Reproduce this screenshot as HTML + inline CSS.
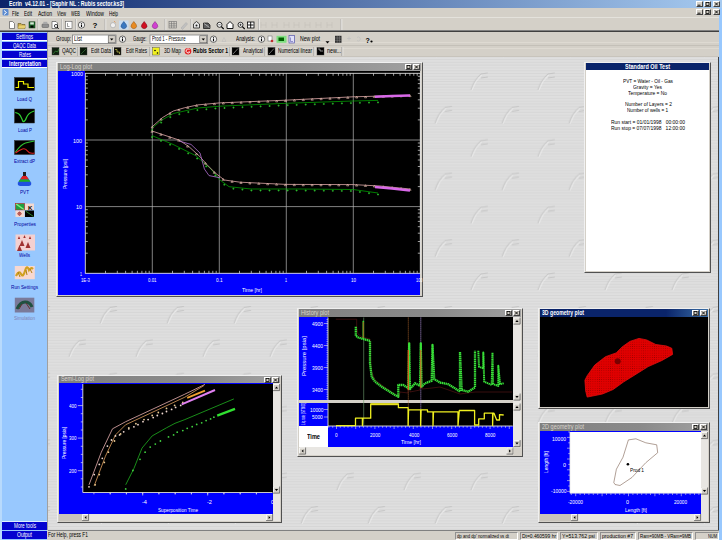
<!DOCTYPE html><html><head><meta charset="utf-8"><style>
*{margin:0;padding:0;box-sizing:border-box}
html,body{width:722px;height:540px;overflow:hidden;background:#D4D0C8;font-family:"Liberation Sans",sans-serif;position:relative}
.a{position:absolute}
.t{position:absolute;white-space:nowrap;line-height:1;}
svg{position:absolute;left:0;top:0;overflow:visible}
</style></head><body>
<div class="a" style="left:0px;top:0px;width:722px;height:8px;background:linear-gradient(to right,#0A246A 0%,#A6CAF0 100%)"></div>
<div id="t1" class="t" style="left:9.0px;top:0.8px;font-size:6.5px;color:#fff;transform:scaleX(0.803);transform-origin:0 0;font-weight:bold">Ecrin&nbsp; v4.12.01 - [Saphir NL : Rubis sector.ks3]</div>
<div class="a" style="left:0px;top:8px;width:722px;height:9px;background:#D4D0C8"></div>
<div id="t2" class="t" style="left:12.0px;top:9.8px;font-size:7px;color:#000;transform:scaleX(0.620);transform-origin:0 0;">File</div>
<div id="t3" class="t" style="left:24.0px;top:9.8px;font-size:7px;color:#000;transform:scaleX(0.663);transform-origin:0 0;">Edit</div>
<div id="t4" class="t" style="left:38.0px;top:9.8px;font-size:7px;color:#000;transform:scaleX(0.719);transform-origin:0 0;">Action</div>
<div id="t5" class="t" style="left:57.0px;top:9.8px;font-size:7px;color:#000;transform:scaleX(0.598);transform-origin:0 0;">View</div>
<div id="t6" class="t" style="left:71.0px;top:9.8px;font-size:7px;color:#000;transform:scaleX(0.564);transform-origin:0 0;">WEB</div>
<div id="t7" class="t" style="left:86.0px;top:9.8px;font-size:7px;color:#000;transform:scaleX(0.723);transform-origin:0 0;">Window</div>
<div id="t8" class="t" style="left:109.0px;top:9.8px;font-size:7px;color:#000;transform:scaleX(0.625);transform-origin:0 0;">Help</div>
<div class="a" style="left:0px;top:17px;width:722px;height:14px;background:#D4D0C8;border-top:1px solid #E4E2DC"></div>
<div class="a" style="left:0px;top:30px;width:722px;height:1px;background:#808080"></div>
<div class="a" style="left:0px;top:31px;width:722px;height:1px;background:#404040"></div>
<svg width="722" height="540"><line x1="38" y1="19" x2="38" y2="30" stroke="#A0A0A0" stroke-width="0.7"/><line x1="38.8" y1="19" x2="38.8" y2="30" stroke="#fff" stroke-width="0.6"/><line x1="61.5" y1="19" x2="61.5" y2="30" stroke="#A0A0A0" stroke-width="0.7"/><line x1="62.3" y1="19" x2="62.3" y2="30" stroke="#fff" stroke-width="0.6"/><line x1="75.5" y1="19" x2="75.5" y2="30" stroke="#A0A0A0" stroke-width="0.7"/><line x1="76.3" y1="19" x2="76.3" y2="30" stroke="#fff" stroke-width="0.6"/><line x1="105" y1="19" x2="105" y2="30" stroke="#A0A0A0" stroke-width="0.7"/><line x1="105.8" y1="19" x2="105.8" y2="30" stroke="#fff" stroke-width="0.6"/><line x1="165" y1="19" x2="165" y2="30" stroke="#A0A0A0" stroke-width="0.7"/><line x1="165.8" y1="19" x2="165.8" y2="30" stroke="#fff" stroke-width="0.6"/><line x1="191" y1="19" x2="191" y2="30" stroke="#A0A0A0" stroke-width="0.7"/><line x1="191.8" y1="19" x2="191.8" y2="30" stroke="#fff" stroke-width="0.6"/><line x1="258.5" y1="19" x2="258.5" y2="30" stroke="#A0A0A0" stroke-width="0.7"/><line x1="259.3" y1="19" x2="259.3" y2="30" stroke="#fff" stroke-width="0.6"/><line x1="341" y1="19" x2="341" y2="30" stroke="#A0A0A0" stroke-width="0.7"/><line x1="341.8" y1="19" x2="341.8" y2="30" stroke="#fff" stroke-width="0.6"/><rect x="2.5" y="9" width="6" height="6.5" rx="1" fill="#5A8AD0"/><path d="M4 10.5l2.5 2-2.5 2" stroke="#fff" stroke-width="1" fill="none"/><path d="M9.5 21.5h3l2 2v5h-5z" fill="#fff" stroke="#404040" stroke-width="0.6"/><path d="M18 23.5h3l1 1h3v4h-7z" fill="#C8A848" stroke="#605020" stroke-width="0.6"/><path d="M19 25.5h7l-1.5 3h-6.5z" fill="#E8D070"/><rect x="29" y="21.8" width="6" height="6.2" fill="#1A6A2A" stroke="#103010" stroke-width="0.5"/><rect x="30.2" y="22.3" width="3.6" height="2.2" fill="#D8E8D8"/><rect x="30.5" y="25.6" width="3" height="2" fill="#000"/><rect x="42" y="24" width="6.6" height="3.5" rx="0.8" fill="#909090" stroke="#505050" stroke-width="0.5"/><rect x="43.3" y="21.8" width="4" height="2.4" fill="#A8A8A8"/><path d="M52 21.5h4l1.5 1.5v5.5h-5.5z" fill="#fff" stroke="#404040" stroke-width="0.6"/><circle cx="56" cy="26" r="1.6" fill="none" stroke="#000" stroke-width="0.7"/><path d="M57.1 27.1l1.6 1.6" stroke="#000" stroke-width="0.9"/><rect x="65.5" y="21.3" width="6.5" height="7" fill="#fff" stroke="#606060" stroke-width="0.6"/><path d="M67.5 23v3.5h2" fill="none" stroke="#404040" stroke-width="0.5"/><circle cx="81.5" cy="25" r="3.2" fill="#F4F4F4" stroke="#303030" stroke-width="0.7"/><path d="M81.5 23.1v0.6M81.5 24.4v2.6" stroke="#000" stroke-width="1.1"/><text x="92.5" y="28.3" font-size="8" font-weight="bold" font-family="Liberation Sans" fill="#000">?</text><circle cx="113" cy="25.2" r="2.6" fill="#F0F0F0" stroke="#909090" stroke-width="0.5"/><path d="M114 21l1.5 1.5" stroke="#E09050" stroke-width="0.8"/><rect x="119" y="20.5" width="9.5" height="9" fill="#C8DCF0"/><path d="M123.8 21.5 Q127.0 25 126.6 26.5 A2.9 2.9 0 0 1 121.0 26.5 Q120.6 25 123.8 21.5Z" fill="#3A78C0" stroke="#204880" stroke-width="0.5"/><path d="M133.8 21.5 Q137.0 25 136.60000000000002 26.5 A2.9 2.9 0 0 1 131.0 26.5 Q130.60000000000002 25 133.8 21.5Z" fill="#E88A20" stroke="#905010" stroke-width="0.5"/><path d="M144.2 21.5 Q147.39999999999998 25 147.0 26.5 A2.9 2.9 0 0 1 141.39999999999998 26.5 Q141.0 25 144.2 21.5Z" fill="#D01020" stroke="#700010" stroke-width="0.5"/><path d="M155 21.5 Q158.2 25 157.8 26.5 A2.9 2.9 0 0 1 152.2 26.5 Q151.8 25 155 21.5Z" fill="#D040D0" stroke="#802080" stroke-width="0.5"/><g stroke="#707070" stroke-width="0.6" fill="none"><rect x="169" y="21.5" width="7.5" height="6.5"/><path d="M169 23.7h7.5M169 25.9h7.5M171.5 21.5v6.5M174 21.5v6.5"/></g><path d="M181 28l5-5.5 1.5 1.5-5 5.5z" fill="#C0C0C0" stroke="#A8A8A8" stroke-width="0.5"/><path d="M193.5 24l3-2.5 3 2.5v4h-6z" fill="#E8E8E8" stroke="#202020" stroke-width="0.8"/><circle cx="196.5" cy="25.6" r="1" fill="#202020"/><path d="M203.5 23h4.5l2 2v3.5h-6.5z" fill="#606060" stroke="#101010" stroke-width="0.7"/><path d="M204 23.5l5.5 4" stroke="#e0e0e0" stroke-width="0.6"/><circle cx="219.5" cy="24.8" r="2.5" fill="#fff" stroke="#000" stroke-width="0.8"/><path d="M221.3 26.6l2.4 2.4" stroke="#000" stroke-width="1.1"/><path d="M218.3 24.8h2.4" stroke="#000" stroke-width="0.6"/><path d="M227 24.5l3-3 3 3v4h-6z" fill="#fff" stroke="#000" stroke-width="0.9"/><circle cx="240.5" cy="24.8" r="2.5" fill="#fff" stroke="#000" stroke-width="0.8"/><path d="M242.3 26.6l2.4 2.4" stroke="#000" stroke-width="1.1"/><path d="M239.3 24.8h2.4M240.5 23.6v2.4" stroke="#000" stroke-width="0.6"/><rect x="247.5" y="22" width="6.5" height="6" fill="#fff" stroke="#000" stroke-width="0.8"/><path d="M248 25h5.5M250.7 22v6" stroke="#000" stroke-width="0.9"/><g stroke="#C4C0B8" stroke-width="0.6" fill="none"><path d="M261 22v6M261 25h5M266 22v6"/></g><g stroke="#C4C0B8" stroke-width="0.6" fill="none"><path d="M272 22v6M272 25h5M277 22v6"/></g><g stroke="#C4C0B8" stroke-width="0.6" fill="none"><path d="M284 22v6M284 25h5M289 22v6"/></g><g stroke="#C4C0B8" stroke-width="0.6" fill="none"><path d="M294 22v6M294 25h5M299 22v6"/></g><g stroke="#C4C0B8" stroke-width="0.6" fill="none"><path d="M305 22v6M305 25h5M310 22v6"/></g><g stroke="#C4C0B8" stroke-width="0.6" fill="none"><path d="M316 22v6M316 25h5M321 22v6"/></g><g stroke="#C4C0B8" stroke-width="0.6" fill="none"><path d="M327 22v6M327 25h5M332 22v6"/></g></svg>
<div class="a" style="left:719px;top:8px;width:3px;height:532px;background:#98C8FE"></div>
<div class="a" style="left:0px;top:32px;width:47px;height:508px;background:#98C8FE"></div>
<div class="a" style="left:0px;top:32px;width:2px;height:508px;background:#B8DAFC"></div>
<div class="a" style="left:47px;top:32px;width:1px;height:498px;background:#A0A0A0"></div>
<div class="a" style="left:2px;top:33px;width:45px;height:8px;background:#0404D0;border-bottom:1px solid #fff"></div>
<div id="t9" class="t" style="left:16.0px;top:33.5px;font-size:6.5px;color:#fff;transform:scaleX(0.723);transform-origin:0 0;">Settings</div>
<div class="a" style="left:2px;top:42px;width:45px;height:8px;background:#0404D0;border-bottom:1px solid #fff"></div>
<div id="t10" class="t" style="left:13.0px;top:42.5px;font-size:6.5px;color:#fff;transform:scaleX(0.663);transform-origin:0 0;">QAQC Data</div>
<div class="a" style="left:2px;top:51px;width:45px;height:8px;background:#0404D0;border-bottom:1px solid #fff"></div>
<div id="t11" class="t" style="left:18.5px;top:51.5px;font-size:6.5px;color:#fff;transform:scaleX(0.707);transform-origin:0 0;">Rates</div>
<div class="a" style="left:2px;top:60px;width:45px;height:8px;background:#0404D0;border-bottom:1px solid #fff"></div>
<div id="t12" class="t" style="left:8.5px;top:60.5px;font-size:6.5px;color:#fff;transform:scaleX(0.764);transform-origin:0 0;font-weight:bold">Interpretation</div>
<svg width="722" height="540"><rect x="14.5" y="77.5" width="20" height="13" fill="#000" stroke="#303030" stroke-width="0.5"/><path d="M15.5 87.5h3v-6h5v2.5h4.5v3.5h6" fill="none" stroke="#F0F000" stroke-width="1.2"/><rect x="14.5" y="109" width="20" height="14" fill="#000" stroke="#303030" stroke-width="0.5"/><path d="M15.2 112.5Q19 113 20.5 116T23 121.5Q25 122 26.5 117.5T34.3 111" fill="none" stroke="#30D030" stroke-width="1.2"/><rect x="14.5" y="140.5" width="20" height="14" fill="#000" stroke="#303030" stroke-width="0.5"/><path d="M15.5 152q6 -8 10 -9t9 -2" fill="none" stroke="#30C030" stroke-width="1.2"/><path d="M15.5 153q4 -3 7 -4t5 2t7 2" fill="none" stroke="#E02020" stroke-width="1.2"/><rect x="23" y="172" width="3" height="4" fill="#202020"/><path d="M22.5 176h4l4.5 6.5q1 3 -2 3.5h-9q-3 -0.5 -2 -3.5z" fill="#2050E0"/><path d="M22.5 176h4l2.5 3.6h-9z" fill="#E02020"/><path d="M20 179.6h9l1.5 2.2h-12z" fill="#20B020"/><rect x="15.5" y="203.5" width="9" height="6.5" fill="#20A040"/><path d="M15.5 203.5l9 6.5" stroke="#80F080" stroke-width="1.5"/><rect x="15.5" y="203.5" width="9" height="6.5" fill="none" stroke="#C02020" stroke-width="0.6"/><rect x="25" y="203.5" width="9" height="6.5" fill="#F4D8D0"/><text x="28" y="209.5" font-size="6" font-weight="bold" font-family="Liberation Sans" fill="#000">K</text><rect x="15.5" y="210.5" width="9" height="6.5" fill="#F4D8D0"/><circle cx="19.5" cy="213.7" r="1.5" fill="none" stroke="#A02020" stroke-width="0.8"/><path d="M17.5 213.7h4M19.5 211.7v4" stroke="#A02020" stroke-width="0.5"/><rect x="25" y="210.5" width="9" height="6.5" fill="#000"/><path d="M25.5 211l8 5.5" stroke="#30A030" stroke-width="0.8"/><rect x="15.5" y="234.5" width="19.5" height="16" fill="#F4D0D0"/><path d="M17.8 238.94L19 236.06L20.2 238.94z" fill="#A03030"/><path d="M23.3 237.94L24.5 235.06L25.7 237.94z" fill="#A03030"/><path d="M28.8 238.94L30 236.06L31.2 238.94z" fill="#A03030"/><path d="M19.5 246.0L22 240.0L24.5 246.0z" fill="#A03030"/><path d="M25.5 248.0L28 242.0L30.5 248.0z" fill="#A03030"/><path d="M17.0 251.0L19.5 245.0L22.0 251.0z" fill="#A03030"/><rect x="14.8" y="266" width="20" height="13.2" fill="#F8D8D0"/><path d="M16 276q3 -6 5 -2t4 -3t4 -1q2 -3 4 -1" fill="none" stroke="#D0A020" stroke-width="2.2"/><path d="M18 272l2 5M26 270l1 5M30 269l2 4" stroke="#B08010" stroke-width="1"/><rect x="14.8" y="297.7" width="19.5" height="14.8" fill="#7A7A9A"/><path d="M17 309q3 -7 8 -7t7 5" fill="none" stroke="#205040" stroke-width="3"/><path d="M19 309l3 -5M26 303l4 6" stroke="#603030" stroke-width="1"/></svg>
<div id="t13" class="t" style="left:17.0px;top:95.9px;font-size:6px;color:#0000A0;transform:scaleX(0.762);transform-origin:0 0;">Load Q</div>
<div id="t14" class="t" style="left:17.5px;top:127.0px;font-size:6px;color:#0000A0;transform:scaleX(0.736);transform-origin:0 0;">Load P</div>
<div id="t15" class="t" style="left:14.0px;top:157.5px;font-size:6px;color:#0000A0;transform:scaleX(0.758);transform-origin:0 0;">Extract dP</div>
<div id="t16" class="t" style="left:20.0px;top:189.4px;font-size:6px;color:#0000A0;transform:scaleX(0.771);transform-origin:0 0;">PVT</div>
<div id="t17" class="t" style="left:13.5px;top:221.0px;font-size:6px;color:#0000A0;transform:scaleX(0.804);transform-origin:0 0;">Properties</div>
<div id="t18" class="t" style="left:19.0px;top:252.4px;font-size:6px;color:#0000A0;transform:scaleX(0.755);transform-origin:0 0;">Wells</div>
<div id="t19" class="t" style="left:11.0px;top:284.4px;font-size:6px;color:#0000A0;transform:scaleX(0.786);transform-origin:0 0;">Run Settings</div>
<div id="t20" class="t" style="left:14.0px;top:315.4px;font-size:6px;color:#8080B0;transform:scaleX(0.750);transform-origin:0 0;">Simulation</div>
<div class="a" style="left:2px;top:521px;width:45px;height:1px;background:#E0F0FF"></div>
<div class="a" style="left:2px;top:522px;width:45px;height:8px;background:#0404D0"></div>
<div id="t21" class="t" style="left:13.5px;top:522.8px;font-size:6.5px;color:#fff;transform:scaleX(0.725);transform-origin:0 0;">More tools</div>
<div class="a" style="left:2px;top:531px;width:45px;height:8px;background:#0404D0"></div>
<div id="t22" class="t" style="left:17.0px;top:531.5px;font-size:6.5px;color:#fff;transform:scaleX(0.769);transform-origin:0 0;">Output</div>
<div class="a" style="left:48px;top:32px;width:671px;height:26px;background:#D4D0C8"></div>
<div class="a" style="left:48px;top:45px;width:671px;height:1px;background:#C4C0B8"></div>
<div class="a" style="left:48px;top:42px;width:671px;height:0.6px;background:#DEDAD2"></div>
<div class="a" style="left:48px;top:48px;width:671px;height:0.6px;background:#DEDAD2"></div>
<div class="a" style="left:48px;top:56px;width:671px;height:1px;background:#C8C4BC"></div>
<svg width="722" height="540"><rect x="72.5" y="35" width="43.5" height="8.5" fill="#fff" stroke="#808080" stroke-width="0.8"/><rect x="108.2" y="35.8" width="7" height="7" fill="#D4D0C8" stroke="#404040" stroke-width="0.5"/><path d="M110 38.6h3.4l-1.7 2z" fill="#000"/><rect x="150" y="35" width="57.6" height="8.5" fill="#fff" stroke="#808080" stroke-width="0.8"/><rect x="199.8" y="35.8" width="7" height="7" fill="#D4D0C8" stroke="#404040" stroke-width="0.5"/><path d="M201.6 38.6h3.4l-1.7 2z" fill="#000"/><circle cx="122.5" cy="39.2" r="3.2" fill="#F4F4F4" stroke="#303030" stroke-width="0.7"/><path d="M122.5 37.300000000000004v0.6M122.5 38.6v2.6" stroke="#000" stroke-width="1.1"/><circle cx="213.5" cy="39.2" r="3.2" fill="#F4F4F4" stroke="#303030" stroke-width="0.7"/><path d="M213.5 37.300000000000004v0.6M213.5 38.6v2.6" stroke="#000" stroke-width="1.1"/><path d="M222 41.5l2-4 2 4z" fill="none" stroke="#C0C0C0" stroke-width="0.6"/><circle cx="261.5" cy="39.2" r="3.2" fill="#F4F4F4" stroke="#303030" stroke-width="0.7"/><path d="M261.5 37.300000000000004v0.6M261.5 38.6v2.6" stroke="#000" stroke-width="1.1"/><rect x="268" y="36" width="4" height="5" fill="#fff" stroke="#606060" stroke-width="0.5"/><circle cx="272" cy="41" r="1.3" fill="#C03030"/><rect x="276.5" y="35.8" width="10" height="7" fill="#80E080"/><rect x="278.5" y="37.5" width="5.5" height="3.5" fill="#006000"/><rect x="289" y="35.5" width="5.5" height="7.5" fill="#E0E0F8" stroke="#4040A0" stroke-width="0.6"/><path d="M290.5 37.5v4h2.5" stroke="#4040A0" stroke-width="0.5" fill="none"/><path d="M325.5 41.2h4l-2 2.2z" fill="#000"/><rect x="335" y="35.8" width="6.5" height="7" fill="#303030"/><path d="M335 38h6.5M335 40.3h6.5M337.2 35.8v7M339.4 35.8v7" stroke="#A0A0A0" stroke-width="0.4"/><path d="M347 38.5h4M349 36.5v4" stroke="#C0C0C0" stroke-width="0.7"/><path d="M357 37.5a2 2 0 1 1 0 3" stroke="#C0C0C0" stroke-width="0.7" fill="none"/><text x="365.5" y="42.5" font-size="7" font-weight="bold" font-family="Liberation Sans" fill="#000">?</text><circle cx="371.5" cy="41.5" r="1.1" fill="#000"/><rect x="52" y="47.5" width="7" height="7.5" fill="#102010" stroke="#404040" stroke-width="0.4"/><path d="M53 54l2.5-3 2 1 1.5-3" stroke="#40A040" stroke-width="0.6" fill="none"/><rect x="80" y="47.5" width="7" height="7.5" fill="#081808" stroke="#404040" stroke-width="0.4"/><path d="M81 54l5-5" stroke="#408040" stroke-width="0.6"/><rect x="114" y="47.5" width="7" height="7.5" fill="#101008" stroke="#404040" stroke-width="0.4"/><path d="M115 49.5h2v2.5h2.5v2" stroke="#E0E060" stroke-width="0.6" fill="none"/><rect x="152.5" y="47.5" width="7" height="7.5" fill="#F0F020" stroke="#404040" stroke-width="0.4"/><circle cx="155" cy="50.5" r="0.8" fill="#000"/><circle cx="157.5" cy="53" r="0.8" fill="#000"/><circle cx="188" cy="51.2" r="3.3" fill="#E02020"/><path d="M189.5 49.5a2 2 0 1 0 0.3 2.5h-1.4" stroke="#fff" stroke-width="0.9" fill="none"/><rect x="232" y="47.5" width="7" height="7.5" fill="#000" stroke="#404040" stroke-width="0.4"/><path d="M233 54l5-5.5" stroke="#C0C0C0" stroke-width="0.6"/><rect x="268" y="47.5" width="7" height="7.5" fill="#000" stroke="#404040" stroke-width="0.4"/><path d="M269 54l5-5.5" stroke="#C0C0C0" stroke-width="0.6"/><rect x="317" y="47.5" width="7" height="7.5" fill="#000" stroke="#404040" stroke-width="0.4"/><path d="M318 49h2v2h3" stroke="#E0E0E0" stroke-width="0.6" fill="none"/><line x1="78" y1="47" x2="78" y2="56" stroke="#808080" stroke-width="0.7"/><line x1="78.8" y1="47" x2="78.8" y2="56" stroke="#fff" stroke-width="0.6"/><line x1="112.5" y1="47" x2="112.5" y2="56" stroke="#808080" stroke-width="0.7"/><line x1="113.3" y1="47" x2="113.3" y2="56" stroke="#fff" stroke-width="0.6"/><line x1="150" y1="47" x2="150" y2="56" stroke="#808080" stroke-width="0.7"/><line x1="150.8" y1="47" x2="150.8" y2="56" stroke="#fff" stroke-width="0.6"/><line x1="230" y1="47" x2="230" y2="56" stroke="#808080" stroke-width="0.7"/><line x1="230.8" y1="47" x2="230.8" y2="56" stroke="#fff" stroke-width="0.6"/><line x1="265" y1="47" x2="265" y2="56" stroke="#808080" stroke-width="0.7"/><line x1="265.8" y1="47" x2="265.8" y2="56" stroke="#fff" stroke-width="0.6"/><line x1="314" y1="47" x2="314" y2="56" stroke="#808080" stroke-width="0.7"/><line x1="314.8" y1="47" x2="314.8" y2="56" stroke="#fff" stroke-width="0.6"/><line x1="342" y1="47" x2="342" y2="56" stroke="#808080" stroke-width="0.7"/><line x1="342.8" y1="47" x2="342.8" y2="56" stroke="#fff" stroke-width="0.6"/></svg>
<div id="t23" class="t" style="left:55.5px;top:36.0px;font-size:6.5px;color:#000;transform:scaleX(0.760);transform-origin:0 0;">Group:</div>
<div id="t24" class="t" style="left:74.0px;top:36.0px;font-size:6.5px;color:#000;transform:scaleX(0.790);transform-origin:0 0;">List</div>
<div id="t25" class="t" style="left:132.6px;top:36.0px;font-size:6.5px;color:#000;transform:scaleX(0.628);transform-origin:0 0;">Gauge:</div>
<div id="t26" class="t" style="left:151.5px;top:36.0px;font-size:6.5px;color:#000;transform:scaleX(0.658);transform-origin:0 0;">Prod 1 - Pressure</div>
<div id="t27" class="t" style="left:235.5px;top:36.0px;font-size:6.5px;color:#000;transform:scaleX(0.723);transform-origin:0 0;">Analysis:</div>
<div id="t28" class="t" style="left:300.0px;top:36.0px;font-size:6.5px;color:#000;transform:scaleX(0.791);transform-origin:0 0;">New plot</div>
<div id="t29" class="t" style="left:62.0px;top:48.2px;font-size:6.5px;color:#000;transform:scaleX(0.731);transform-origin:0 0;">QAQC</div>
<div id="t30" class="t" style="left:91.0px;top:48.2px;font-size:6.5px;color:#000;transform:scaleX(0.748);transform-origin:0 0;">Edit Data</div>
<div id="t31" class="t" style="left:126.0px;top:48.2px;font-size:6.5px;color:#000;transform:scaleX(0.700);transform-origin:0 0;">Edit Rates</div>
<div id="t32" class="t" style="left:164.0px;top:48.2px;font-size:6.5px;color:#000;transform:scaleX(0.747);transform-origin:0 0;">3D Map</div>
<div id="t33" class="t" style="left:192.5px;top:48.2px;font-size:6.5px;color:#000;transform:scaleX(0.769);transform-origin:0 0;font-weight:bold">Rubis Sector 1</div>
<div id="t34" class="t" style="left:243.0px;top:48.2px;font-size:6.5px;color:#000;transform:scaleX(0.719);transform-origin:0 0;">Analytical</div>
<div id="t35" class="t" style="left:278.0px;top:48.2px;font-size:6.5px;color:#000;transform:scaleX(0.724);transform-origin:0 0;">Numerical linear</div>
<div id="t36" class="t" style="left:327.0px;top:48.2px;font-size:6.5px;color:#000;transform:scaleX(0.824);transform-origin:0 0;">new...</div>
<svg width="722" height="540" style="left:0;top:0"><defs>
<pattern id="tex" x="473.8" y="80" width="67" height="66.7" patternUnits="userSpaceOnUse">
<rect width="67" height="66.7" fill="#DFDFDF"/>
<g stroke="#D3D3D3" stroke-width="0.7">
<line x1="0" y1="1.5" x2="67" y2="1.5"/><line x1="0" y1="4.3" x2="67" y2="4.3"/><line x1="0" y1="7.1" x2="67" y2="7.1"/><line x1="0" y1="9.9" x2="67" y2="9.9"/><line x1="0" y1="12.7" x2="67" y2="12.7"/><line x1="0" y1="15.5" x2="67" y2="15.5"/><line x1="0" y1="18.3" x2="67" y2="18.3"/><line x1="0" y1="21.1" x2="67" y2="21.1"/><line x1="0" y1="23.9" x2="67" y2="23.9"/><line x1="0" y1="26.7" x2="67" y2="26.7"/><line x1="0" y1="29.5" x2="67" y2="29.5"/><line x1="0" y1="32.3" x2="67" y2="32.3"/><line x1="0" y1="35.1" x2="67" y2="35.1"/><line x1="0" y1="37.9" x2="67" y2="37.9"/><line x1="0" y1="40.7" x2="67" y2="40.7"/><line x1="0" y1="43.5" x2="67" y2="43.5"/><line x1="0" y1="46.3" x2="67" y2="46.3"/><line x1="0" y1="49.1" x2="67" y2="49.1"/><line x1="0" y1="51.9" x2="67" y2="51.9"/><line x1="0" y1="54.7" x2="67" y2="54.7"/><line x1="0" y1="57.5" x2="67" y2="57.5"/><line x1="0" y1="60.3" x2="67" y2="60.3"/><line x1="0" y1="63.1" x2="67" y2="63.1"/><line x1="0" y1="65.9" x2="67" y2="65.9"/>
</g>
<g fill="none" stroke="#C2C2C2" stroke-width="0.9"><path d="M-3 10 Q0 0 7 -6 L14 -7 M7 -2 L14 -3" transform=""/><path d="M-3 10 Q0 0 7 -6 L14 -7 M7 -2 L14 -3" transform="translate(67 0)"/><path d="M-3 10 Q0 0 7 -6 L14 -7 M7 -2 L14 -3" transform="translate(0 66.7)"/><path d="M-3 10 Q0 0 7 -6 L14 -7 M7 -2 L14 -3" transform="translate(67 66.7)"/><path d="M-3 10 Q0 0 7 -6 L14 -7 M7 -2 L14 -3" transform="translate(31.2 -33.3)"/><path d="M-3 10 Q0 0 7 -6 L14 -7 M7 -2 L14 -3" transform="translate(31.2 33.3)"/></g>
<g fill="none" stroke="#F0F0F0" stroke-width="0.7"><path d="M-2 10.5 Q1 1 8 -5" transform=""/><path d="M-2 10.5 Q1 1 8 -5" transform="translate(67 0)"/><path d="M-2 10.5 Q1 1 8 -5" transform="translate(0 66.7)"/><path d="M-2 10.5 Q1 1 8 -5" transform="translate(67 66.7)"/><path d="M-2 10.5 Q1 1 8 -5" transform="translate(31.2 -33.3)"/><path d="M-2 10.5 Q1 1 8 -5" transform="translate(31.2 33.3)"/></g>
</pattern></defs>
<rect x="48" y="57" width="671" height="473" fill="url(#tex)"/></svg>
<div class="a" style="left:48px;top:530px;width:671px;height:10px;background:#D4D0C8"></div>
<div class="a" style="left:48px;top:530px;width:671px;height:1px;background:#808080"></div>
<div id="t37" class="t" style="left:48.0px;top:531.8px;font-size:6.5px;color:#000;transform:scaleX(0.743);transform-origin:0 0;">For Help, press F1</div>
<div id="t38" class="t" style="left:457.0px;top:532.5px;font-size:6px;color:#000;transform:scaleX(0.710);transform-origin:0 0;">dp and dp' normalized vs dt</div>
<div id="t39" class="t" style="left:522.0px;top:532.5px;font-size:6px;color:#000;transform:scaleX(0.819);transform-origin:0 0;">Dt=0.460599 hr</div>
<div id="t40" class="t" style="left:562.0px;top:532.5px;font-size:6px;color:#000;transform:scaleX(0.856);transform-origin:0 0;">Y=513.762 psi</div>
<div id="t41" class="t" style="left:602.0px;top:532.5px;font-size:6px;color:#000;transform:scaleX(0.852);transform-origin:0 0;">production #7</div>
<div id="t42" class="t" style="left:640.0px;top:532.5px;font-size:6px;color:#000;transform:scaleX(0.732);transform-origin:0 0;">Ram=90MB - VRam=9MB</div>
<div id="t43" class="t" style="left:708.0px;top:532.5px;font-size:6px;color:#000;transform:scaleX(0.658);transform-origin:0 0;">NUM</div>
<div class="a" style="left:455px;top:531.5px;width:63px;height:8.5px;border-left:1px solid #909090;border-top:1px solid #909090;border-right:1px solid #fff;border-bottom:1px solid #fff"></div>
<div class="a" style="left:520px;top:531.5px;width:38px;height:8.5px;border-left:1px solid #909090;border-top:1px solid #909090;border-right:1px solid #fff;border-bottom:1px solid #fff"></div>
<div class="a" style="left:560px;top:531.5px;width:38px;height:8.5px;border-left:1px solid #909090;border-top:1px solid #909090;border-right:1px solid #fff;border-bottom:1px solid #fff"></div>
<div class="a" style="left:600px;top:531.5px;width:36px;height:8.5px;border-left:1px solid #909090;border-top:1px solid #909090;border-right:1px solid #fff;border-bottom:1px solid #fff"></div>
<div class="a" style="left:638px;top:531.5px;width:55px;height:8.5px;border-left:1px solid #909090;border-top:1px solid #909090;border-right:1px solid #fff;border-bottom:1px solid #fff"></div>
<div class="a" style="left:695px;top:531.5px;width:24px;height:8.5px;border-left:1px solid #909090;border-top:1px solid #909090;border-right:1px solid #fff;border-bottom:1px solid #fff"></div>
<div class="a" style="left:696px;top:9px;width:7px;height:6px;background:#D4D0C8;border-left:1px solid #fff;border-top:1px solid #fff;border-right:1px solid #404040;border-bottom:1px solid #404040"></div>
<svg width="722" height="540"><line x1="697.5" y1="13.2" x2="700.5" y2="13.2" stroke="#000" stroke-width="0.9"/></svg>
<div class="a" style="left:696px;top:1px;width:7px;height:6px;background:#D4D0C8;border-left:1px solid #fff;border-top:1px solid #fff;border-right:1px solid #404040;border-bottom:1px solid #404040"></div>
<svg width="722" height="540"><line x1="697.5" y1="5.2" x2="700.5" y2="5.2" stroke="#000" stroke-width="0.9"/></svg>
<div class="a" style="left:704px;top:9px;width:7px;height:6px;background:#D4D0C8;border-left:1px solid #fff;border-top:1px solid #fff;border-right:1px solid #404040;border-bottom:1px solid #404040"></div>
<svg width="722" height="540"><rect x="706" y="10.5" width="3" height="3" fill="none" stroke="#000" stroke-width="0.8"/></svg>
<div class="a" style="left:704px;top:1px;width:7px;height:6px;background:#D4D0C8;border-left:1px solid #fff;border-top:1px solid #fff;border-right:1px solid #404040;border-bottom:1px solid #404040"></div>
<svg width="722" height="540"><rect x="706" y="2.5" width="3" height="3" fill="none" stroke="#000" stroke-width="0.8"/></svg>
<div class="a" style="left:713px;top:9px;width:7px;height:6px;background:#D4D0C8;border-left:1px solid #fff;border-top:1px solid #fff;border-right:1px solid #404040;border-bottom:1px solid #404040"></div>
<svg width="722" height="540"><path d="M715 10.5 L718 13.5 M718 10.5 L715 13.5" stroke="#000" stroke-width="0.9"/></svg>
<div class="a" style="left:713px;top:1px;width:7px;height:6px;background:#D4D0C8;border-left:1px solid #fff;border-top:1px solid #fff;border-right:1px solid #404040;border-bottom:1px solid #404040"></div>
<svg width="722" height="540"><path d="M715 2.5 L718 5.5 M718 2.5 L715 5.5" stroke="#000" stroke-width="0.9"/></svg>
<div class="a" style="left:56px;top:62px;width:367px;height:235px;background:#D4D0C8;border-left:1px solid #F0F0F0;border-top:1px solid #F0F0F0;border-right:1px solid #505050;border-bottom:1px solid #505050"></div>
<div class="a" style="left:58px;top:63px;width:363px;height:8px;background:linear-gradient(to right,#808080,#8A8A8A 60%,#A0A0A0)"></div>
<div id="t44" class="t" style="left:59.5px;top:63.8px;font-size:6.5px;color:#D8D4CC;transform:scaleX(0.885);transform-origin:0 0;">Log-Log plot</div>
<div class="a" style="left:405px;top:64px;width:7px;height:6px;background:#D4D0C8;border-left:1px solid #fff;border-top:1px solid #fff;border-right:1px solid #404040;border-bottom:1px solid #404040"></div>
<svg width="722" height="540"><rect x="407" y="65.5" width="3" height="3" fill="none" stroke="#000" stroke-width="0.8"/></svg>
<div class="a" style="left:413px;top:64px;width:7px;height:6px;background:#D4D0C8;border-left:1px solid #fff;border-top:1px solid #fff;border-right:1px solid #404040;border-bottom:1px solid #404040"></div>
<svg width="722" height="540"><path d="M415 65.5 L418 68.5 M418 65.5 L415 68.5" stroke="#000" stroke-width="0.9"/></svg>
<div class="a" style="left:58px;top:71px;width:362px;height:224px;background:#0000FF"></div>
<div class="a" style="left:85px;top:71px;width:335px;height:202px;background:#000"></div>
<svg width="722" height="540"><line x1="152.3" y1="73.3" x2="152.3" y2="273.3" stroke="#B8B8B8" stroke-width="0.7"/><line x1="219.3" y1="73.3" x2="219.3" y2="273.3" stroke="#B8B8B8" stroke-width="0.7"/><line x1="286.3" y1="73.3" x2="286.3" y2="273.3" stroke="#B8B8B8" stroke-width="0.7"/><line x1="353.3" y1="73.3" x2="353.3" y2="273.3" stroke="#B8B8B8" stroke-width="0.7"/><line x1="85.3" y1="206.6" x2="420.3" y2="206.6" stroke="#B8B8B8" stroke-width="0.7"/><line x1="85.3" y1="140.0" x2="420.3" y2="140.0" stroke="#B8B8B8" stroke-width="0.7"/><rect x="85.3" y="73.3" width="335.0" height="200.0" fill="none" stroke="#E0E0E0" stroke-width="0.9"/><path d="M105.5 273.3v-2.5M105.5 73.3v2.5M117.3 273.3v-2.5M117.3 73.3v2.5M125.6 273.3v-2.5M125.6 73.3v2.5M132.1 273.3v-2.5M132.1 73.3v2.5M137.4 273.3v-2.5M137.4 73.3v2.5M141.9 273.3v-2.5M141.9 73.3v2.5M145.8 273.3v-2.5M145.8 73.3v2.5M149.2 273.3v-2.5M149.2 73.3v2.5M172.5 273.3v-2.5M172.5 73.3v2.5M184.3 273.3v-2.5M184.3 73.3v2.5M192.6 273.3v-2.5M192.6 73.3v2.5M199.1 273.3v-2.5M199.1 73.3v2.5M204.4 273.3v-2.5M204.4 73.3v2.5M208.9 273.3v-2.5M208.9 73.3v2.5M212.8 273.3v-2.5M212.8 73.3v2.5M216.2 273.3v-2.5M216.2 73.3v2.5M239.5 273.3v-2.5M239.5 73.3v2.5M251.3 273.3v-2.5M251.3 73.3v2.5M259.6 273.3v-2.5M259.6 73.3v2.5M266.1 273.3v-2.5M266.1 73.3v2.5M271.4 273.3v-2.5M271.4 73.3v2.5M275.9 273.3v-2.5M275.9 73.3v2.5M279.8 273.3v-2.5M279.8 73.3v2.5M283.2 273.3v-2.5M283.2 73.3v2.5M306.5 273.3v-2.5M306.5 73.3v2.5M318.3 273.3v-2.5M318.3 73.3v2.5M326.6 273.3v-2.5M326.6 73.3v2.5M333.1 273.3v-2.5M333.1 73.3v2.5M338.4 273.3v-2.5M338.4 73.3v2.5M342.9 273.3v-2.5M342.9 73.3v2.5M346.8 273.3v-2.5M346.8 73.3v2.5M350.2 273.3v-2.5M350.2 73.3v2.5M373.5 273.3v-2.5M373.5 73.3v2.5M385.3 273.3v-2.5M385.3 73.3v2.5M393.6 273.3v-2.5M393.6 73.3v2.5M400.1 273.3v-2.5M400.1 73.3v2.5M405.4 273.3v-2.5M405.4 73.3v2.5M409.9 273.3v-2.5M409.9 73.3v2.5M413.8 273.3v-2.5M413.8 73.3v2.5M417.2 273.3v-2.5M417.2 73.3v2.5M85.3 253.2h2.5M420.3 253.2h-2.5M85.3 241.5h2.5M420.3 241.5h-2.5M85.3 233.2h2.5M420.3 233.2h-2.5M85.3 226.7h2.5M420.3 226.7h-2.5M85.3 221.4h2.5M420.3 221.4h-2.5M85.3 217.0h2.5M420.3 217.0h-2.5M85.3 213.1h2.5M420.3 213.1h-2.5M85.3 209.7h2.5M420.3 209.7h-2.5M85.3 186.6h2.5M420.3 186.6h-2.5M85.3 174.8h2.5M420.3 174.8h-2.5M85.3 166.5h2.5M420.3 166.5h-2.5M85.3 160.0h2.5M420.3 160.0h-2.5M85.3 154.8h2.5M420.3 154.8h-2.5M85.3 150.3h2.5M420.3 150.3h-2.5M85.3 146.4h2.5M420.3 146.4h-2.5M85.3 143.0h2.5M420.3 143.0h-2.5M85.3 119.9h2.5M420.3 119.9h-2.5M85.3 108.2h2.5M420.3 108.2h-2.5M85.3 99.8h2.5M420.3 99.8h-2.5M85.3 93.4h2.5M420.3 93.4h-2.5M85.3 88.1h2.5M420.3 88.1h-2.5M85.3 83.6h2.5M420.3 83.6h-2.5M85.3 79.8h2.5M420.3 79.8h-2.5M85.3 76.3h2.5M420.3 76.3h-2.5" stroke="#E0E0E0" stroke-width="0.7"/><polyline points="152.2,128.0 162.0,120.0 173.3,113.5 197.8,108.0 219.6,106.2 286.0,103.3 353.0,101.0 378.0,100.4" fill="none" stroke="#00B000" stroke-width="0.7" stroke-linejoin="round" /><polyline points="152.0,135.6 173.0,144.4 195.6,155.6 211.0,169.0 220.0,180.0 229.0,186.7 251.0,189.0 300.0,189.0 353.0,189.5 378.0,193.0" fill="none" stroke="#00B000" stroke-width="0.7" stroke-linejoin="round" /><path d="M151.2 130.0h2M152.2 129.0v2" stroke="#30D030" stroke-width="0.7"/><path d="M160.2 122.6h2M161.2 121.6v2" stroke="#30D030" stroke-width="0.7"/><path d="M169.3 117.2h2M170.3 116.2v2" stroke="#30D030" stroke-width="0.7"/><path d="M178.3 114.2h2M179.3 113.2v2" stroke="#30D030" stroke-width="0.7"/><path d="M187.3 112.1h2M188.3 111.1v2" stroke="#30D030" stroke-width="0.7"/><path d="M196.4 110.1h2M197.4 109.1v2" stroke="#30D030" stroke-width="0.7"/><path d="M205.4 109.3h2M206.4 108.3v2" stroke="#30D030" stroke-width="0.7"/><path d="M214.4 108.5h2M215.4 107.5v2" stroke="#30D030" stroke-width="0.7"/><path d="M223.5 108.0h2M224.5 107.0v2" stroke="#30D030" stroke-width="0.7"/><path d="M232.5 107.6h2M233.5 106.6v2" stroke="#30D030" stroke-width="0.7"/><path d="M241.5 107.2h2M242.5 106.2v2" stroke="#30D030" stroke-width="0.7"/><path d="M250.6 106.8h2M251.6 105.8v2" stroke="#30D030" stroke-width="0.7"/><path d="M259.6 106.4h2M260.6 105.4v2" stroke="#30D030" stroke-width="0.7"/><path d="M268.6 106.0h2M269.6 105.0v2" stroke="#30D030" stroke-width="0.7"/><path d="M277.6 105.6h2M278.6 104.6v2" stroke="#30D030" stroke-width="0.7"/><path d="M286.7 105.2h2M287.7 104.2v2" stroke="#30D030" stroke-width="0.7"/><path d="M295.7 104.9h2M296.7 103.9v2" stroke="#30D030" stroke-width="0.7"/><path d="M304.7 104.6h2M305.7 103.6v2" stroke="#30D030" stroke-width="0.7"/><path d="M313.8 104.3h2M314.8 103.3v2" stroke="#30D030" stroke-width="0.7"/><path d="M322.8 104.0h2M323.8 103.0v2" stroke="#30D030" stroke-width="0.7"/><path d="M331.8 103.7h2M332.8 102.7v2" stroke="#30D030" stroke-width="0.7"/><path d="M340.9 103.4h2M341.9 102.4v2" stroke="#30D030" stroke-width="0.7"/><path d="M349.9 103.1h2M350.9 102.1v2" stroke="#30D030" stroke-width="0.7"/><path d="M358.9 102.8h2M359.9 101.8v2" stroke="#30D030" stroke-width="0.7"/><path d="M368.0 102.6h2M369.0 101.6v2" stroke="#30D030" stroke-width="0.7"/><path d="M377.0 102.4h2M378.0 101.4v2" stroke="#30D030" stroke-width="0.7"/><path d="M151.0 137.1h2M152.0 136.1v2" stroke="#30D030" stroke-width="0.7"/><path d="M160.0 140.9h2M161.0 139.9v2" stroke="#30D030" stroke-width="0.7"/><path d="M169.1 144.7h2M170.1 143.7v2" stroke="#30D030" stroke-width="0.7"/><path d="M178.1 148.9h2M179.1 147.9v2" stroke="#30D030" stroke-width="0.7"/><path d="M187.2 153.4h2M188.2 152.4v2" stroke="#30D030" stroke-width="0.7"/><path d="M196.2 158.5h2M197.2 157.5v2" stroke="#30D030" stroke-width="0.7"/><path d="M205.2 166.4h2M206.2 165.4v2" stroke="#30D030" stroke-width="0.7"/><path d="M214.3 175.7h2M215.3 174.7v2" stroke="#30D030" stroke-width="0.7"/><path d="M223.3 184.7h2M224.3 183.7v2" stroke="#30D030" stroke-width="0.7"/><path d="M232.4 188.7h2M233.4 187.7v2" stroke="#30D030" stroke-width="0.7"/><path d="M241.4 189.6h2M242.4 188.6v2" stroke="#30D030" stroke-width="0.7"/><path d="M250.4 190.5h2M251.4 189.5v2" stroke="#30D030" stroke-width="0.7"/><path d="M259.5 190.5h2M260.5 189.5v2" stroke="#30D030" stroke-width="0.7"/><path d="M268.5 190.5h2M269.5 189.5v2" stroke="#30D030" stroke-width="0.7"/><path d="M277.6 190.5h2M278.6 189.5v2" stroke="#30D030" stroke-width="0.7"/><path d="M286.6 190.5h2M287.6 189.5v2" stroke="#30D030" stroke-width="0.7"/><path d="M295.6 190.5h2M296.6 189.5v2" stroke="#30D030" stroke-width="0.7"/><path d="M304.7 190.6h2M305.7 189.6v2" stroke="#30D030" stroke-width="0.7"/><path d="M313.7 190.6h2M314.7 189.6v2" stroke="#30D030" stroke-width="0.7"/><path d="M322.8 190.7h2M323.8 189.7v2" stroke="#30D030" stroke-width="0.7"/><path d="M331.8 190.8h2M332.8 189.8v2" stroke="#30D030" stroke-width="0.7"/><path d="M340.8 190.9h2M341.8 189.9v2" stroke="#30D030" stroke-width="0.7"/><path d="M349.9 191.0h2M350.9 190.0v2" stroke="#30D030" stroke-width="0.7"/><path d="M358.9 192.0h2M359.9 191.0v2" stroke="#30D030" stroke-width="0.7"/><path d="M368.0 193.2h2M369.0 192.2v2" stroke="#30D030" stroke-width="0.7"/><path d="M377.0 194.5h2M378.0 193.5v2" stroke="#30D030" stroke-width="0.7"/><polyline points="152.2,126.7 162.2,117.8 173.3,111.0 184.4,107.8 197.8,104.9 219.6,102.9 251.0,101.6 286.0,100.2 353.0,96.8 410.0,95.3" fill="none" stroke="#E0A8A8" stroke-width="0.8" stroke-linejoin="round" /><polyline points="152.0,131.0 162.0,134.4 179.0,140.0 189.0,146.7 200.0,156.7 206.7,164.4 215.6,173.3 224.4,180.0 240.0,182.2 286.0,184.4 353.0,184.6 380.0,186.0 410.0,189.0" fill="none" stroke="#E0A8A8" stroke-width="0.8" stroke-linejoin="round" /><polyline points="179.0,141.0 191.0,144.4 200.0,153.0 204.4,169.0 209.0,175.6 220.0,177.8" fill="none" stroke="#B070D0" stroke-width="0.8" stroke-linejoin="round" /><path d="M151.1 128.0L152.2 126.2L153.3 128.0z" fill="none" stroke="#E8C0B0" stroke-width="0.6"/><path d="M160.0 120.1L161.1 118.3L162.2 120.1z" fill="none" stroke="#E8C0B0" stroke-width="0.6"/><path d="M168.9 114.3L170.0 112.5L171.1 114.3z" fill="none" stroke="#E8C0B0" stroke-width="0.6"/><path d="M177.8 110.7L178.9 108.9L180.0 110.7z" fill="none" stroke="#E8C0B0" stroke-width="0.6"/><path d="M186.7 108.4L187.8 106.6L188.9 108.4z" fill="none" stroke="#E8C0B0" stroke-width="0.6"/><path d="M195.5 106.4L196.6 104.6L197.7 106.4z" fill="none" stroke="#E8C0B0" stroke-width="0.6"/><path d="M204.4 105.5L205.5 103.7L206.6 105.5z" fill="none" stroke="#E8C0B0" stroke-width="0.6"/><path d="M213.3 104.7L214.4 102.9L215.5 104.7z" fill="none" stroke="#E8C0B0" stroke-width="0.6"/><path d="M222.2 104.0L223.3 102.2L224.4 104.0z" fill="none" stroke="#E8C0B0" stroke-width="0.6"/><path d="M231.1 103.7L232.2 101.9L233.3 103.7z" fill="none" stroke="#E8C0B0" stroke-width="0.6"/><path d="M240.0 103.3L241.1 101.5L242.2 103.3z" fill="none" stroke="#E8C0B0" stroke-width="0.6"/><path d="M248.9 102.9L250.0 101.1L251.1 102.9z" fill="none" stroke="#E8C0B0" stroke-width="0.6"/><path d="M257.8 102.6L258.9 100.8L260.0 102.6z" fill="none" stroke="#E8C0B0" stroke-width="0.6"/><path d="M266.7 102.2L267.8 100.4L268.9 102.2z" fill="none" stroke="#E8C0B0" stroke-width="0.6"/><path d="M275.6 101.9L276.7 100.1L277.8 101.9z" fill="none" stroke="#E8C0B0" stroke-width="0.6"/><path d="M284.4 101.5L285.5 99.7L286.6 101.5z" fill="none" stroke="#E8C0B0" stroke-width="0.6"/><path d="M293.3 101.1L294.4 99.3L295.5 101.1z" fill="none" stroke="#E8C0B0" stroke-width="0.6"/><path d="M302.2 100.6L303.3 98.8L304.4 100.6z" fill="none" stroke="#E8C0B0" stroke-width="0.6"/><path d="M311.1 100.2L312.2 98.4L313.3 100.2z" fill="none" stroke="#E8C0B0" stroke-width="0.6"/><path d="M320.0 99.7L321.1 97.9L322.2 99.7z" fill="none" stroke="#E8C0B0" stroke-width="0.6"/><path d="M328.9 99.3L330.0 97.5L331.1 99.3z" fill="none" stroke="#E8C0B0" stroke-width="0.6"/><path d="M337.8 98.8L338.9 97.0L340.0 98.8z" fill="none" stroke="#E8C0B0" stroke-width="0.6"/><path d="M346.7 98.4L347.8 96.6L348.9 98.4z" fill="none" stroke="#E8C0B0" stroke-width="0.6"/><path d="M355.6 98.0L356.7 96.2L357.8 98.0z" fill="none" stroke="#E8C0B0" stroke-width="0.6"/><path d="M364.5 97.8L365.6 96.0L366.7 97.8z" fill="none" stroke="#E8C0B0" stroke-width="0.6"/><path d="M373.3 97.5L374.4 95.7L375.5 97.5z" fill="none" stroke="#E8C0B0" stroke-width="0.6"/><path d="M382.2 97.3L383.3 95.5L384.4 97.3z" fill="none" stroke="#E8C0B0" stroke-width="0.6"/><path d="M391.1 97.1L392.2 95.3L393.3 97.1z" fill="none" stroke="#E8C0B0" stroke-width="0.6"/><path d="M400.0 96.8L401.1 95.0L402.2 96.8z" fill="none" stroke="#E8C0B0" stroke-width="0.6"/><path d="M408.9 96.6L410.0 94.8L411.1 96.6z" fill="none" stroke="#E8C0B0" stroke-width="0.6"/><path d="M150.9 132.3L152.0 130.5L153.1 132.3z" fill="none" stroke="#E8C0B0" stroke-width="0.6"/><path d="M159.8 135.3L160.9 133.5L162.0 135.3z" fill="none" stroke="#E8C0B0" stroke-width="0.6"/><path d="M168.7 138.3L169.8 136.5L170.9 138.3z" fill="none" stroke="#E8C0B0" stroke-width="0.6"/><path d="M177.6 141.2L178.7 139.4L179.8 141.2z" fill="none" stroke="#E8C0B0" stroke-width="0.6"/><path d="M186.5 147.1L187.6 145.3L188.7 147.1z" fill="none" stroke="#E8C0B0" stroke-width="0.6"/><path d="M195.4 154.8L196.5 153.0L197.6 154.8z" fill="none" stroke="#E8C0B0" stroke-width="0.6"/><path d="M204.3 164.2L205.4 162.4L206.5 164.2z" fill="none" stroke="#E8C0B0" stroke-width="0.6"/><path d="M213.2 173.3L214.3 171.5L215.4 173.3z" fill="none" stroke="#E8C0B0" stroke-width="0.6"/><path d="M222.1 180.4L223.2 178.6L224.3 180.4z" fill="none" stroke="#E8C0B0" stroke-width="0.6"/><path d="M231.0 182.4L232.1 180.6L233.2 182.4z" fill="none" stroke="#E8C0B0" stroke-width="0.6"/><path d="M239.9 183.5L241.0 181.7L242.1 183.5z" fill="none" stroke="#E8C0B0" stroke-width="0.6"/><path d="M248.8 184.0L249.9 182.2L251.0 184.0z" fill="none" stroke="#E8C0B0" stroke-width="0.6"/><path d="M257.7 184.4L258.8 182.6L259.9 184.4z" fill="none" stroke="#E8C0B0" stroke-width="0.6"/><path d="M266.6 184.8L267.7 183.0L268.8 184.8z" fill="none" stroke="#E8C0B0" stroke-width="0.6"/><path d="M275.5 185.2L276.6 183.4L277.7 185.2z" fill="none" stroke="#E8C0B0" stroke-width="0.6"/><path d="M284.3 185.7L285.4 183.9L286.5 185.7z" fill="none" stroke="#E8C0B0" stroke-width="0.6"/><path d="M293.2 185.7L294.3 183.9L295.4 185.7z" fill="none" stroke="#E8C0B0" stroke-width="0.6"/><path d="M302.1 185.8L303.2 184.0L304.3 185.8z" fill="none" stroke="#E8C0B0" stroke-width="0.6"/><path d="M311.0 185.8L312.1 184.0L313.2 185.8z" fill="none" stroke="#E8C0B0" stroke-width="0.6"/><path d="M319.9 185.8L321.0 184.0L322.1 185.8z" fill="none" stroke="#E8C0B0" stroke-width="0.6"/><path d="M328.8 185.8L329.9 184.0L331.0 185.8z" fill="none" stroke="#E8C0B0" stroke-width="0.6"/><path d="M337.7 185.9L338.8 184.1L339.9 185.9z" fill="none" stroke="#E8C0B0" stroke-width="0.6"/><path d="M346.6 185.9L347.7 184.1L348.8 185.9z" fill="none" stroke="#E8C0B0" stroke-width="0.6"/><path d="M355.5 186.1L356.6 184.3L357.7 186.1z" fill="none" stroke="#E8C0B0" stroke-width="0.6"/><path d="M364.4 186.5L365.5 184.7L366.6 186.5z" fill="none" stroke="#E8C0B0" stroke-width="0.6"/><path d="M373.3 187.0L374.4 185.2L375.5 187.0z" fill="none" stroke="#E8C0B0" stroke-width="0.6"/><path d="M382.2 187.6L383.3 185.8L384.4 187.6z" fill="none" stroke="#E8C0B0" stroke-width="0.6"/><path d="M391.1 188.5L392.2 186.7L393.3 188.5z" fill="none" stroke="#E8C0B0" stroke-width="0.6"/><path d="M400.0 189.4L401.1 187.6L402.2 189.4z" fill="none" stroke="#E8C0B0" stroke-width="0.6"/><path d="M408.9 190.3L410.0 188.5L411.1 190.3z" fill="none" stroke="#E8C0B0" stroke-width="0.6"/><polyline points="375.0,96.8 392.0,96.0 410.0,95.5" fill="none" stroke="#D868E8" stroke-width="2.4" stroke-linejoin="round" /><polyline points="375.0,187.0 392.0,188.5 410.0,190.5" fill="none" stroke="#D868E8" stroke-width="2.6" stroke-linejoin="round" /></svg>
<div id="t45" class="t" style="left:71.0px;top:71.0px;font-size:6px;color:#fff;transform:scaleX(0.898);transform-origin:0 0;">1000</div>
<div id="t46" class="t" style="left:73.0px;top:137.5px;font-size:6px;color:#fff;transform:scaleX(0.899);transform-origin:0 0;">100</div>
<div id="t47" class="t" style="left:76.0px;top:204.2px;font-size:6px;color:#fff;transform:scaleX(0.897);transform-origin:0 0;">10</div>
<div id="t48" class="t" style="left:80.0px;top:270.5px;font-size:6px;color:#fff;transform:scaleX(0.598);transform-origin:0 0;">1</div>
<div id="t49" class="t" style="left:81.0px;top:277.0px;font-size:6px;color:#fff;transform:scaleX(0.709);transform-origin:0 0;">1E-3</div>
<div id="t50" class="t" style="left:148.2px;top:277.0px;font-size:6px;color:#fff;transform:scaleX(0.727);transform-origin:0 0;">0.01</div>
<div id="t51" class="t" style="left:215.9px;top:277.0px;font-size:6px;color:#fff;transform:scaleX(0.779);transform-origin:0 0;">0.1</div>
<div id="t52" class="t" style="left:285.2px;top:277.0px;font-size:6px;color:#fff;transform:scaleX(0.598);transform-origin:0 0;">1</div>
<div id="t53" class="t" style="left:350.7px;top:277.0px;font-size:6px;color:#fff;transform:scaleX(0.748);transform-origin:0 0;">10</div>
<div id="t54" class="t" style="left:415.8px;top:277.0px;font-size:6px;color:#fff;transform:scaleX(0.649);transform-origin:0 0;">100</div>
<div id="t55" class="t" style="left:242.2px;top:287.2px;font-size:6px;color:#fff;transform:scaleX(0.853);transform-origin:0 0;">Time [hr]</div>
<div id="t56" class="t" style="left:64.5px;top:174.0px;font-size:6px;color:#fff;transform:translate(-50%,-50%) rotate(-90deg) scaleX(0.818);transform-origin:50% 50%">Pressure [psi]</div>
<div class="a" style="left:584px;top:62px;width:127px;height:211px;background:#D4D0C8;border-left:1px solid #F0F0F0;border-top:1px solid #F0F0F0;border-right:1px solid #505050;border-bottom:1px solid #505050"></div>
<div class="a" style="left:586px;top:63px;width:123px;height:7px;background:#0A246A"></div>
<div class="a" style="left:586px;top:70px;width:123px;height:201px;background:#fff"></div>
<div id="t57" class="t" style="left:625.0px;top:63.5px;font-size:6.5px;color:#fff;transform:scaleX(0.844);transform-origin:0 0;font-weight:bold">Standard Oil Test</div>
<div id="t58" class="t" style="left:622.5px;top:77.8px;font-size:6px;color:#000;transform:scaleX(0.791);transform-origin:0 0;">PVT = Water - Oil - Gas</div>
<div id="t59" class="t" style="left:633.0px;top:83.7px;font-size:6px;color:#000;transform:scaleX(0.816);transform-origin:0 0;">Gravity = Yes</div>
<div id="t60" class="t" style="left:628.0px;top:89.5px;font-size:6px;color:#000;transform:scaleX(0.809);transform-origin:0 0;">Temperature = No</div>
<div id="t61" class="t" style="left:625.0px;top:101.2px;font-size:6px;color:#000;transform:scaleX(0.812);transform-origin:0 0;">Number of Layers = 2</div>
<div id="t62" class="t" style="left:627.0px;top:106.7px;font-size:6px;color:#000;transform:scaleX(0.771);transform-origin:0 0;">Number of wells = 1</div>
<div id="t63" class="t" style="left:611.0px;top:119.0px;font-size:6px;color:#000;transform:scaleX(0.826);transform-origin:0 0;">Run start = 01/01/1998&nbsp;&nbsp; 00:00:00</div>
<div id="t64" class="t" style="left:611.0px;top:124.5px;font-size:6px;color:#000;transform:scaleX(0.829);transform-origin:0 0;">Run stop = 07/07/1998&nbsp;&nbsp; 12:00:00</div>
<div class="a" style="left:297px;top:308px;width:226px;height:149px;background:#D4D0C8;border-left:1px solid #F0F0F0;border-top:1px solid #F0F0F0;border-right:1px solid #505050;border-bottom:1px solid #505050"></div>
<div class="a" style="left:299px;top:309px;width:222px;height:8px;background:linear-gradient(to right,#808080,#8A8A8A 60%,#A0A0A0)"></div>
<div id="t65" class="t" style="left:300.5px;top:309.8px;font-size:6.5px;color:#D8D4CC;transform:scaleX(0.861);transform-origin:0 0;">History plot</div>
<div class="a" style="left:505px;top:310px;width:7px;height:6px;background:#D4D0C8;border-left:1px solid #fff;border-top:1px solid #fff;border-right:1px solid #404040;border-bottom:1px solid #404040"></div>
<svg width="722" height="540"><rect x="507" y="311.5" width="3" height="3" fill="none" stroke="#000" stroke-width="0.8"/></svg>
<div class="a" style="left:513px;top:310px;width:7px;height:6px;background:#D4D0C8;border-left:1px solid #fff;border-top:1px solid #fff;border-right:1px solid #404040;border-bottom:1px solid #404040"></div>
<svg width="722" height="540"><path d="M515 311.5 L518 314.5 M518 311.5 L515 314.5" stroke="#000" stroke-width="0.9"/></svg>
<div class="a" style="left:299px;top:317px;width:214px;height:130px;background:#0000FF"></div>
<div class="a" style="left:328px;top:317px;width:185px;height:83px;background:#000"></div>
<div class="a" style="left:299px;top:400px;width:214px;height:3px;background:#D4D0C8"></div>
<div class="a" style="left:328px;top:403px;width:185px;height:23px;background:#000"></div>
<div class="a" style="left:299px;top:426px;width:29px;height:21px;background:#fff"></div>
<svg width="722" height="540"><line x1="328" y1="317.5" x2="328" y2="400.5" stroke="#E0E0E0" stroke-width="0.9"/><line x1="328" y1="403.5" x2="328" y2="426" stroke="#E0E0E0" stroke-width="0.9"/><line x1="328" y1="426" x2="512.7" y2="426" stroke="#E0E0E0" stroke-width="0.9"/><path d="M326.5 319.5h1.5M326.5 321.7h1.5M326.5 323.9h1.5M326.5 326.1h1.5M326.5 328.3h1.5M326.5 330.5h1.5M326.5 332.7h1.5M326.5 334.9h1.5M326.5 337.1h1.5M326.5 339.3h1.5M326.5 341.5h1.5M326.5 343.7h1.5M326.5 345.9h1.5M326.5 348.1h1.5M326.5 350.3h1.5M326.5 352.5h1.5M326.5 354.7h1.5M326.5 356.9h1.5M326.5 359.1h1.5M326.5 361.3h1.5M326.5 363.5h1.5M326.5 365.7h1.5M326.5 367.9h1.5M326.5 370.1h1.5M326.5 372.3h1.5M326.5 374.5h1.5M326.5 376.7h1.5M326.5 378.9h1.5M326.5 381.1h1.5M326.5 383.3h1.5M326.5 385.5h1.5M326.5 387.7h1.5M326.5 389.9h1.5M326.5 392.1h1.5M326.5 394.3h1.5M326.5 396.5h1.5M326.5 398.7h1.5M324 323.5h4M324 345.5h4M324 367.5h4M324 389.5h4M324 409.5h4M324 417h4M328.8 426v1.8M332.7 426v1.8M336.5 426v3M340.3 426v1.8M344.2 426v1.8M348.0 426v1.8M351.9 426v1.8M355.7 426v3M359.5 426v1.8M363.4 426v1.8M367.2 426v1.8M371.1 426v1.8M374.9 426v3M378.7 426v1.8M382.6 426v1.8M386.4 426v1.8M390.3 426v1.8M394.1 426v3M397.9 426v1.8M401.8 426v1.8M405.6 426v1.8M409.5 426v1.8M413.3 426v3M417.1 426v1.8M421.0 426v1.8M424.8 426v1.8M428.7 426v1.8M432.5 426v3M436.3 426v1.8M440.2 426v1.8M444.0 426v1.8M447.9 426v1.8M451.7 426v3M455.5 426v1.8M459.4 426v1.8M463.2 426v1.8M467.1 426v1.8M470.9 426v3M474.7 426v1.8M478.6 426v1.8M482.4 426v1.8M486.3 426v1.8M490.1 426v3M493.9 426v1.8M497.8 426v1.8M501.6 426v1.8M505.5 426v1.8M509.3 426v3" stroke="#E0E0E0" stroke-width="0.6"/><line x1="363.7" y1="317.5" x2="363.7" y2="426" stroke="#70A070" stroke-width="0.6"/><line x1="408.3" y1="317.5" x2="408.3" y2="426" stroke="#C07030" stroke-width="0.7" stroke-dasharray="1.2 0.8"/><line x1="420.8" y1="317.5" x2="420.8" y2="426" stroke="#C0A0F0" stroke-width="0.8" stroke-dasharray="1.2 0.8"/><polyline points="335.8,319.2 356.7,319.2 356.7,327.5 358.0,334.0 362.0,337.0 370.0,339.0 370.0,342.0 371.0,370.0 375.0,380.0 390.0,391.0 399.0,397.0 400.0,392.0 408.0,393.0 409.0,345.0 410.0,392.0 420.0,390.0 421.0,345.0 422.0,389.0 432.0,388.0 440.0,387.0 460.0,394.0 475.0,392.0 512.0,392.0" fill="none" stroke="#601818" stroke-width="0.6" stroke-linejoin="round" /><polyline points="355.8,326.7 355.8,335.8 358.3,337.5 363.3,339.0 370.0,340.8 370.0,363.3 371.7,376.7 375.0,381.7 381.7,386.7 388.3,390.8 395.0,395.0 398.3,396.7 398.3,385.0 403.3,385.0 408.3,388.3 409.2,343.3 410.0,389.0 415.0,383.3 420.0,385.8 420.8,343.3 421.5,386.7 425.0,383.3 431.7,380.8 432.5,345.0 434.2,379.2 440.0,382.5 448.3,384.2 455.0,388.3 460.0,391.7 460.0,351.7 461.7,390.0 468.3,391.7 475.0,387.5 475.0,350.8" fill="none" stroke="#38E038" stroke-width="2.3" stroke-linejoin="round" stroke-dasharray="1.4 0.5"/><polyline points="478.3,350.8 479.0,366.7 483.3,368.3 483.3,352.5 484.2,381.7 491.7,385.0 492.5,352.5 493.0,384.0 498.3,386.0 498.3,365.8 500.0,384.0 504.2,383.3" fill="none" stroke="#38E038" stroke-width="2.0" stroke-linejoin="round" stroke-dasharray="1.4 0.5"/><polyline points="363.3,320.8 363.3,339.0" fill="none" stroke="#30E030" stroke-width="1.6" stroke-linejoin="round" /><polyline points="363.3,322.0 363.3,338.0" fill="none" stroke="#C04020" stroke-width="0.8" stroke-linejoin="round" /><polyline points="408.3,350.0 408.3,390.0" fill="none" stroke="#E06020" stroke-width="1.2" stroke-linejoin="round" /><polyline points="420.8,350.0 420.8,388.0" fill="none" stroke="#E06020" stroke-width="1.0" stroke-linejoin="round" /><polyline points="336.0,425.7 355.5,425.7 355.5,418.2 362.4,418.2 362.4,425.7 362.9,418.2 370.7,418.2 370.7,404.0 398.4,404.0 398.4,407.7 408.1,407.7 408.1,425.7 408.6,409.9 420.6,409.9 420.6,425.7 421.1,409.9 427.5,409.9 427.5,411.9 433.0,411.9 433.0,425.7 433.5,411.9 458.0,411.9 458.0,425.7 459.3,410.5 474.6,410.5 474.6,425.0 478.7,425.0 478.7,418.8 484.3,418.8 484.3,413.2 492.6,413.2 492.6,425.7 493.0,413.2 494.0,413.2 496.7,420.0 499.5,420.0 499.5,414.6 503.7,415.0" fill="none" stroke="#F0F020" stroke-width="1.3" stroke-linejoin="round" /><polyline points="370.7,404.3 398.4,404.3" fill="none" stroke="#E8E020" stroke-width="1.8" stroke-linejoin="round" /></svg>
<div id="t66" class="t" style="left:312.0px;top:320.8px;font-size:6px;color:#fff;transform:scaleX(0.823);transform-origin:0 0;">4900</div>
<div id="t67" class="t" style="left:312.0px;top:342.8px;font-size:6px;color:#fff;transform:scaleX(0.823);transform-origin:0 0;">4400</div>
<div id="t68" class="t" style="left:312.0px;top:364.8px;font-size:6px;color:#fff;transform:scaleX(0.823);transform-origin:0 0;">3900</div>
<div id="t69" class="t" style="left:312.0px;top:386.8px;font-size:6px;color:#fff;transform:scaleX(0.823);transform-origin:0 0;">3400</div>
<div id="t70" class="t" style="left:309.5px;top:406.8px;font-size:6px;color:#fff;transform:scaleX(0.809);transform-origin:0 0;">10000</div>
<div id="t71" class="t" style="left:312.2px;top:414.3px;font-size:6px;color:#fff;transform:scaleX(0.808);transform-origin:0 0;">5000</div>
<div id="t72" class="t" style="left:335.2px;top:432.0px;font-size:6px;color:#fff;transform:scaleX(0.778);transform-origin:0 0;">0</div>
<div id="t73" class="t" style="left:370.0px;top:432.0px;font-size:6px;color:#fff;transform:scaleX(0.778);transform-origin:0 0;">2000</div>
<div id="t74" class="t" style="left:408.5px;top:432.0px;font-size:6px;color:#fff;transform:scaleX(0.778);transform-origin:0 0;">4000</div>
<div id="t75" class="t" style="left:446.8px;top:432.0px;font-size:6px;color:#fff;transform:scaleX(0.778);transform-origin:0 0;">6000</div>
<div id="t76" class="t" style="left:485.1px;top:432.0px;font-size:6px;color:#fff;transform:scaleX(0.778);transform-origin:0 0;">8000</div>
<div id="t77" class="t" style="left:401.0px;top:439.3px;font-size:6px;color:#fff;transform:scaleX(0.853);transform-origin:0 0;">Time [hr]</div>
<div id="t78" class="t" style="left:307.0px;top:433.6px;font-size:6.5px;color:#000;transform:scaleX(0.863);transform-origin:0 0;font-weight:bold">Time</div>
<div id="t79" class="t" style="left:303.5px;top:356.0px;font-size:6px;color:#fff;transform:translate(-50%,-50%) rotate(-90deg) scaleX(0.999);transform-origin:50% 50%">Pressure [psia]</div>
<div id="t80" class="t" style="left:303.0px;top:414.0px;font-size:6px;color:#fff;transform:translate(-50%,-50%) rotate(-90deg) scaleX(0.515);transform-origin:50% 50%">Liq.rate [STB/D]</div>
<div class="a" style="left:513px;top:317px;width:8px;height:130px;background:#E8E6E2"></div>
<div class="a" style="left:299px;top:447px;width:222px;height:8px;background:#E8E6E2"></div>
<div class="a" style="left:538px;top:308px;width:172px;height:101px;background:#D4D0C8;border-left:1px solid #F0F0F0;border-top:1px solid #F0F0F0;border-right:1px solid #505050;border-bottom:1px solid #505050"></div>
<div class="a" style="left:540px;top:309px;width:168px;height:8px;background:linear-gradient(to right,#0A246A,#0A246A 75%,#3A6EA5)"></div>
<div id="t81" class="t" style="left:541.5px;top:309.8px;font-size:6.5px;color:#fff;transform:scaleX(0.791);transform-origin:0 0;font-weight:bold">3D geometry plot</div>
<div class="a" style="left:692px;top:310px;width:7px;height:6px;background:#D4D0C8;border-left:1px solid #fff;border-top:1px solid #fff;border-right:1px solid #404040;border-bottom:1px solid #404040"></div>
<svg width="722" height="540"><rect x="694" y="311.5" width="3" height="3" fill="none" stroke="#000" stroke-width="0.8"/></svg>
<div class="a" style="left:700px;top:310px;width:7px;height:6px;background:#D4D0C8;border-left:1px solid #fff;border-top:1px solid #fff;border-right:1px solid #404040;border-bottom:1px solid #404040"></div>
<svg width="722" height="540"><path d="M702 311.5 L705 314.5 M705 311.5 L702 314.5" stroke="#000" stroke-width="0.9"/></svg>
<div class="a" style="left:540px;top:317px;width:168px;height:90px;background:#000"></div>
<svg width="722" height="540"><defs><pattern id="mesh" width="2.2" height="2.2" patternUnits="userSpaceOnUse"><rect width="2.2" height="2.2" fill="#E00000"/><circle cx="1.1" cy="1.1" r="0.45" fill="#900000"/></pattern></defs><path d="M584.9 380.3 L587.2 375.7 L594.8 365.0 L605.5 356.7 L616.2 352.9 L622.3 346.8 L629.9 341.4 L639.0 338.4 L646.6 339.9 L655.8 344.5 L666.5 346.0 L671.8 348.3 L672.6 354.4 L661.9 360.5 L648.2 366.6 L636.0 374.2 L623.8 381.8 L613.1 389.5 L602.4 394.0 L587.2 397.1 L585.7 391.0Z" fill="url(#mesh)" stroke="#E01010" stroke-width="0.8"/><circle cx="617.7" cy="361.3" r="3" fill="#600000" opacity="0.8"/></svg>
<div class="a" style="left:57px;top:375px;width:225px;height:148px;background:#D4D0C8;border-left:1px solid #F0F0F0;border-top:1px solid #F0F0F0;border-right:1px solid #505050;border-bottom:1px solid #505050"></div>
<div class="a" style="left:59px;top:376px;width:221px;height:7px;background:linear-gradient(to right,#808080,#8A8A8A 60%,#A0A0A0)"></div>
<div id="t82" class="t" style="left:60.5px;top:376.2px;font-size:6.5px;color:#D8D4CC;transform:scaleX(0.823);transform-origin:0 0;">Semi-Log plot</div>
<div class="a" style="left:264px;top:377px;width:7px;height:6px;background:#D4D0C8;border-left:1px solid #fff;border-top:1px solid #fff;border-right:1px solid #404040;border-bottom:1px solid #404040"></div>
<svg width="722" height="540"><rect x="266" y="378.5" width="3" height="3" fill="none" stroke="#000" stroke-width="0.8"/></svg>
<div class="a" style="left:272px;top:377px;width:7px;height:6px;background:#D4D0C8;border-left:1px solid #fff;border-top:1px solid #fff;border-right:1px solid #404040;border-bottom:1px solid #404040"></div>
<svg width="722" height="540"><path d="M274 378.5 L277 381.5 M277 378.5 L274 381.5" stroke="#000" stroke-width="0.9"/></svg>
<div class="a" style="left:59px;top:383px;width:214px;height:131px;background:#0000FF"></div>
<div class="a" style="left:83px;top:384px;width:190px;height:109px;background:#000"></div>
<svg width="722" height="540"><path d="M82.8 384V492.5H272.5" fill="none" stroke="#E0E0E0" stroke-width="0.9"/><path d="M80.8 487.0h2M80.8 478.8h2M77.8 470.7h5M80.8 462.6h2M80.8 454.4h2M80.8 446.3h2M77.8 438.1h5M80.8 430.0h2M80.8 421.9h2M80.8 413.7h2M77.8 405.6h5M80.8 397.5h2M80.8 389.3h2M93.9 492.5v1.8M110.2 492.5v1.8M126.4 492.5v1.8M110.2 492.5v1.8M126.4 492.5v1.8M142.7 492.5v1.8M158.9 492.5v1.8M142.7 492.5v3M158.9 492.5v1.8M175.2 492.5v1.8M191.4 492.5v1.8M175.2 492.5v1.8M191.4 492.5v1.8M207.7 492.5v1.8M223.9 492.5v1.8M207.7 492.5v3M223.9 492.5v1.8M240.2 492.5v1.8M256.4 492.5v1.8M240.2 492.5v1.8M256.4 492.5v1.8" stroke="#E0E0E0" stroke-width="0.7"/><polyline points="89.0,484.8 101.3,452.2 112.5,428.8 125.7,421.7 184.8,394.2 205.0,384.4" fill="none" stroke="#E8B0B0" stroke-width="0.8" stroke-linejoin="round" /><polyline points="94.2,485.8 105.4,456.3 115.5,434.9 125.7,424.7 184.8,397.2 203.9,385.6" fill="none" stroke="#E0A060" stroke-width="0.8" stroke-linejoin="round" /><polyline points="125.7,484.8 133.9,468.5 142.0,448.1 152.2,435.9 166.5,427.8 175.0,423.3 184.8,419.6 233.9,398.9" fill="none" stroke="#20B020" stroke-width="0.8" stroke-linejoin="round" /><circle cx="89.0" cy="486.8" r="0.9" fill="#F0D8D0"/><circle cx="94.2" cy="474.6" r="0.9" fill="#F0D8D0"/><circle cx="99.3" cy="464.4" r="0.9" fill="#F0D8D0"/><circle cx="102.3" cy="458.3" r="0.9" fill="#F0D8D0"/><circle cx="107.4" cy="446.1" r="0.9" fill="#F0D8D0"/><circle cx="111.5" cy="440.0" r="0.9" fill="#F0D8D0"/><circle cx="115.5" cy="435.9" r="0.9" fill="#F0D8D0"/><circle cx="119.6" cy="434.9" r="0.9" fill="#F0D8D0"/><circle cx="123.7" cy="431.8" r="0.9" fill="#F0D8D0"/><circle cx="128.8" cy="428.8" r="0.9" fill="#F0D8D0"/><circle cx="133.9" cy="426.8" r="0.9" fill="#F0D8D0"/><circle cx="138.0" cy="424.7" r="0.9" fill="#F0D8D0"/><circle cx="143.0" cy="421.7" r="0.9" fill="#F0D8D0"/><circle cx="148.1" cy="419.6" r="0.9" fill="#F0D8D0"/><circle cx="153.2" cy="417.6" r="0.9" fill="#F0D8D0"/><circle cx="157.3" cy="415.5" r="0.9" fill="#F0D8D0"/><circle cx="162.4" cy="413.5" r="0.9" fill="#F0D8D0"/><circle cx="166.5" cy="411.5" r="0.9" fill="#F0D8D0"/><circle cx="171.6" cy="409.4" r="0.9" fill="#F0D8D0"/><circle cx="175.6" cy="407.4" r="0.9" fill="#F0D8D0"/><circle cx="180.7" cy="405.4" r="0.9" fill="#F0D8D0"/><circle cx="95.2" cy="484.8" r="0.9" fill="#E8C890"/><circle cx="99.3" cy="474.6" r="0.9" fill="#E8C890"/><circle cx="104.3" cy="462.4" r="0.9" fill="#E8C890"/><circle cx="108.4" cy="452.2" r="0.9" fill="#E8C890"/><circle cx="114.5" cy="441.0" r="0.9" fill="#E8C890"/><circle cx="120.6" cy="433.9" r="0.9" fill="#E8C890"/><circle cx="128.8" cy="427.8" r="0.9" fill="#E8C890"/><circle cx="135.9" cy="423.7" r="0.9" fill="#E8C890"/><circle cx="144.0" cy="419.6" r="0.9" fill="#E8C890"/><circle cx="152.2" cy="415.5" r="0.9" fill="#E8C890"/><circle cx="158.3" cy="412.5" r="0.9" fill="#E8C890"/><circle cx="166.5" cy="408.4" r="0.9" fill="#E8C890"/><circle cx="174.6" cy="405.4" r="0.9" fill="#E8C890"/><circle cx="182.8" cy="402.3" r="0.9" fill="#E8C890"/><circle cx="125.7" cy="488.9" r="0.9" fill="#40D040"/><circle cx="132.9" cy="470.5" r="0.9" fill="#40D040"/><circle cx="140.0" cy="459.3" r="0.9" fill="#40D040"/><circle cx="145.1" cy="452.2" r="0.9" fill="#40D040"/><circle cx="150.2" cy="447.1" r="0.9" fill="#40D040"/><circle cx="155.3" cy="444.1" r="0.9" fill="#40D040"/><circle cx="160.4" cy="441.0" r="0.9" fill="#40D040"/><circle cx="168.5" cy="436.9" r="0.9" fill="#40D040"/><circle cx="173.6" cy="434.9" r="0.9" fill="#40D040"/><circle cx="177.2" cy="432.2" r="0.9" fill="#40D040"/><circle cx="182.8" cy="430.6" r="0.9" fill="#40D040"/><circle cx="187.2" cy="428.3" r="0.9" fill="#40D040"/><circle cx="192.2" cy="426.7" r="0.9" fill="#40D040"/><circle cx="196.7" cy="424.4" r="0.9" fill="#40D040"/><circle cx="201.7" cy="422.8" r="0.9" fill="#40D040"/><circle cx="206.1" cy="420.6" r="0.9" fill="#40D040"/><circle cx="210.6" cy="418.9" r="0.9" fill="#40D040"/><circle cx="213.9" cy="417.2" r="0.9" fill="#40D040"/><polyline points="181.7,404.4 215.0,390.0" fill="none" stroke="#E080F0" stroke-width="2.0" stroke-linejoin="round" /><polyline points="187.2,397.8 205.0,390.6" fill="none" stroke="#F0A030" stroke-width="1.8" stroke-linejoin="round" /><polyline points="217.2,415.6 235.0,408.9" fill="none" stroke="#30E030" stroke-width="2.2" stroke-linejoin="round" /></svg>
<div id="t83" class="t" style="left:68.5px;top:402.8px;font-size:6px;color:#fff;transform:scaleX(0.749);transform-origin:0 0;">400</div>
<div id="t84" class="t" style="left:68.5px;top:434.6px;font-size:6px;color:#fff;transform:scaleX(0.749);transform-origin:0 0;">300</div>
<div id="t85" class="t" style="left:68.5px;top:467.8px;font-size:6px;color:#fff;transform:scaleX(0.749);transform-origin:0 0;">200</div>
<div id="t86" class="t" style="left:141.5px;top:498.7px;font-size:6px;color:#fff;transform:scaleX(0.936);transform-origin:0 0;">-4</div>
<div id="t87" class="t" style="left:206.5px;top:498.7px;font-size:6px;color:#fff;transform:scaleX(0.936);transform-origin:0 0;">-2</div>
<div id="t88" class="t" style="left:271.0px;top:498.7px;font-size:6px;color:#fff;transform:scaleX(0.897);transform-origin:0 0;">0</div>
<div id="t89" class="t" style="left:158.0px;top:507.0px;font-size:6px;color:#fff;transform:scaleX(0.779);transform-origin:0 0;">Superposition Time</div>
<div id="t90" class="t" style="left:64.0px;top:443.0px;font-size:6px;color:#fff;transform:translate(-50%,-50%) rotate(-90deg) scaleX(0.799);transform-origin:50% 50%">Pressure [psia]</div>
<div class="a" style="left:273px;top:383px;width:7px;height:131px;background:#E8E6E2"></div>
<div class="a" style="left:59px;top:514px;width:221px;height:7px;background:#E8E6E2"></div>
<div class="a" style="left:538px;top:422px;width:172px;height:101px;background:#D4D0C8;border-left:1px solid #F0F0F0;border-top:1px solid #F0F0F0;border-right:1px solid #505050;border-bottom:1px solid #505050"></div>
<div class="a" style="left:540px;top:423px;width:168px;height:8px;background:linear-gradient(to right,#808080,#8A8A8A 60%,#A0A0A0)"></div>
<div id="t91" class="t" style="left:541.5px;top:423.8px;font-size:6.5px;color:#D8D4CC;transform:scaleX(0.848);transform-origin:0 0;">2D geometry plot</div>
<div class="a" style="left:692px;top:424px;width:7px;height:6px;background:#D4D0C8;border-left:1px solid #fff;border-top:1px solid #fff;border-right:1px solid #404040;border-bottom:1px solid #404040"></div>
<svg width="722" height="540"><rect x="694" y="425.5" width="3" height="3" fill="none" stroke="#000" stroke-width="0.8"/></svg>
<div class="a" style="left:700px;top:424px;width:7px;height:6px;background:#D4D0C8;border-left:1px solid #fff;border-top:1px solid #fff;border-right:1px solid #404040;border-bottom:1px solid #404040"></div>
<svg width="722" height="540"><path d="M702 425.5 L705 428.5 M705 425.5 L702 428.5" stroke="#000" stroke-width="0.9"/></svg>
<div class="a" style="left:540px;top:431px;width:161px;height:83px;background:#0000FF"></div>
<div class="a" style="left:570px;top:432px;width:131px;height:61px;background:#fff"></div>
<svg width="722" height="540"><path d="M635.9 438.8 L645.8 442.8 L656.7 444.8 L657.7 452.7 L645.8 462.7 L631.9 477.5 L620.0 485.5 L615.0 484.5 L613.8 482.5 L616.4 469.2 L623.0 457.2 L628.4 439.9Z" fill="none" stroke="#705040" stroke-width="0.55"/><circle cx="627.9" cy="464.2" r="1.3" fill="#000"/><path d="M568.2 432.0h1.8M567 437.4h3M568.2 442.8h1.8M567 448.2h3M568.2 453.6h1.8M567 459.0h3M568.2 464.4h1.8M567 469.8h3M568.2 475.2h1.8M567 480.6h3M568.2 486.0h1.8M567 491.4h3M571.3 493.2v1.8M575.7 493.2v3M580.1 493.2v1.8M584.5 493.2v1.8M588.9 493.2v1.8M593.3 493.2v1.8M597.7 493.2v1.8M602.1 493.2v3M606.5 493.2v1.8M610.9 493.2v1.8M615.3 493.2v1.8M619.7 493.2v1.8M624.1 493.2v1.8M628.5 493.2v3M632.9 493.2v1.8M637.3 493.2v1.8M641.7 493.2v1.8M646.1 493.2v1.8M650.5 493.2v1.8M654.9 493.2v3M659.3 493.2v1.8M663.7 493.2v1.8M668.1 493.2v1.8M672.5 493.2v1.8M676.9 493.2v1.8M681.3 493.2v3M685.7 493.2v1.8M690.1 493.2v1.8M694.5 493.2v1.8M698.9 493.2v1.8" stroke="#E0E0E0" stroke-width="0.6"/><path d="M570 432V493.2H701" fill="none" stroke="#E8E8E8" stroke-width="0.8"/></svg>
<div id="t92" class="t" style="left:552.0px;top:436.3px;font-size:6px;color:#fff;transform:scaleX(0.839);transform-origin:0 0;">10000</div>
<div id="t93" class="t" style="left:563.0px;top:461.6px;font-size:6px;color:#fff;transform:scaleX(0.897);transform-origin:0 0;">0</div>
<div id="t94" class="t" style="left:550.5px;top:488.0px;font-size:6px;color:#fff;transform:scaleX(0.829);transform-origin:0 0;">-10000</div>
<div id="t95" class="t" style="left:568.2px;top:498.5px;font-size:6px;color:#fff;transform:scaleX(0.803);transform-origin:0 0;">-20000</div>
<div id="t96" class="t" style="left:626.0px;top:498.5px;font-size:6px;color:#fff;transform:scaleX(0.897);transform-origin:0 0;">0</div>
<div id="t97" class="t" style="left:673.5px;top:498.5px;font-size:6px;color:#fff;transform:scaleX(0.779);transform-origin:0 0;">20000</div>
<div id="t98" class="t" style="left:624.5px;top:507.2px;font-size:6px;color:#fff;transform:scaleX(0.824);transform-origin:0 0;">Length [ft]</div>
<div id="t99" class="t" style="left:545.5px;top:461.7px;font-size:6px;color:#fff;transform:translate(-50%,-50%) rotate(-90deg) scaleX(0.824);transform-origin:50% 50%">Length [ft]</div>
<div id="t100" class="t" style="left:630.0px;top:467.0px;font-size:6px;color:#000;transform:scaleX(0.792);transform-origin:0 0;">Prod 1</div>
<div class="a" style="left:701px;top:431px;width:7px;height:83px;background:#E8E6E2"></div>
<div class="a" style="left:540px;top:514px;width:168px;height:7px;background:#E8E6E2"></div>
<svg width="722" height="540"><rect x="513.5" y="317.5" width="7" height="7" fill="#D4D0C8"/><path d="M514.0 324.5V318.0H520.5" fill="none" stroke="#fff" stroke-width="0.8"/><path d="M520.1 317.5V324.1H513.5" fill="none" stroke="#606060" stroke-width="0.8"/><path d="M515.4 321.9h3.2l-1.6 -1.8z" fill="#000"/><rect x="513.5" y="393.5" width="7" height="7" fill="#D4D0C8"/><path d="M514.0 400.5V394.0H520.5" fill="none" stroke="#fff" stroke-width="0.8"/><path d="M520.1 393.5V400.1H513.5" fill="none" stroke="#606060" stroke-width="0.8"/><path d="M515.4 396.1h3.2l-1.6 1.8z" fill="#000"/><rect x="513.5" y="403.5" width="7" height="7" fill="#D4D0C8"/><path d="M514.0 410.5V404.0H520.5" fill="none" stroke="#fff" stroke-width="0.8"/><path d="M520.1 403.5V410.1H513.5" fill="none" stroke="#606060" stroke-width="0.8"/><path d="M515.4 407.9h3.2l-1.6 -1.8z" fill="#000"/><rect x="513.5" y="440" width="7" height="7" fill="#D4D0C8"/><path d="M514.0 447V440.5H520.5" fill="none" stroke="#fff" stroke-width="0.8"/><path d="M520.1 440V446.6H513.5" fill="none" stroke="#606060" stroke-width="0.8"/><path d="M515.4 442.6h3.2l-1.6 1.8z" fill="#000"/><rect x="299" y="447.5" width="7" height="7" fill="#D4D0C8"/><path d="M299.5 454.5V448.0H306" fill="none" stroke="#fff" stroke-width="0.8"/><path d="M305.6 447.5V454.1H299" fill="none" stroke="#606060" stroke-width="0.8"/><path d="M303.4 449.4v3.2l-1.8 -1.6z" fill="#000"/><rect x="506.5" y="447.5" width="7" height="7" fill="#D4D0C8"/><path d="M507.0 454.5V448.0H513.5" fill="none" stroke="#fff" stroke-width="0.8"/><path d="M513.1 447.5V454.1H506.5" fill="none" stroke="#606060" stroke-width="0.8"/><path d="M509.1 449.4v3.2l1.8 -1.6z" fill="#000"/><rect x="513.5" y="447.5" width="7.5" height="7.5" fill="#D4D0C8"/><rect x="273" y="384" width="7" height="7" fill="#D4D0C8"/><path d="M273.5 391V384.5H280" fill="none" stroke="#fff" stroke-width="0.8"/><path d="M279.6 384V390.6H273" fill="none" stroke="#606060" stroke-width="0.8"/><path d="M274.9 388.4h3.2l-1.6 -1.8z" fill="#000"/><rect x="273" y="486.5" width="7" height="7" fill="#D4D0C8"/><path d="M273.5 493.5V487.0H280" fill="none" stroke="#fff" stroke-width="0.8"/><path d="M279.6 486.5V493.1H273" fill="none" stroke="#606060" stroke-width="0.8"/><path d="M274.9 489.1h3.2l-1.6 1.8z" fill="#000"/><rect x="82" y="514" width="7" height="7" fill="#D4D0C8"/><path d="M82.5 521V514.5H89" fill="none" stroke="#fff" stroke-width="0.8"/><path d="M88.6 514V520.6H82" fill="none" stroke="#606060" stroke-width="0.8"/><path d="M86.4 515.9v3.2l-1.8 -1.6z" fill="#000"/><rect x="266" y="514" width="7" height="7" fill="#D4D0C8"/><path d="M266.5 521V514.5H273" fill="none" stroke="#fff" stroke-width="0.8"/><path d="M272.6 514V520.6H266" fill="none" stroke="#606060" stroke-width="0.8"/><path d="M268.6 515.9v3.2l1.8 -1.6z" fill="#000"/><rect x="59" y="514" width="23" height="7" fill="#C8C4BC"/><rect x="701" y="432" width="7" height="7" fill="#D4D0C8"/><path d="M701.5 439V432.5H708" fill="none" stroke="#fff" stroke-width="0.8"/><path d="M707.6 432V438.6H701" fill="none" stroke="#606060" stroke-width="0.8"/><path d="M702.9 436.4h3.2l-1.6 -1.8z" fill="#000"/><rect x="701" y="487.5" width="7" height="7" fill="#D4D0C8"/><path d="M701.5 494.5V488.0H708" fill="none" stroke="#fff" stroke-width="0.8"/><path d="M707.6 487.5V494.1H701" fill="none" stroke="#606060" stroke-width="0.8"/><path d="M702.9 490.1h3.2l-1.6 1.8z" fill="#000"/><rect x="571" y="514" width="7" height="7" fill="#D4D0C8"/><path d="M571.5 521V514.5H578" fill="none" stroke="#fff" stroke-width="0.8"/><path d="M577.6 514V520.6H571" fill="none" stroke="#606060" stroke-width="0.8"/><path d="M575.4 515.9v3.2l-1.8 -1.6z" fill="#000"/><rect x="694" y="514" width="7" height="7" fill="#D4D0C8"/><path d="M694.5 521V514.5H701" fill="none" stroke="#fff" stroke-width="0.8"/><path d="M700.6 514V520.6H694" fill="none" stroke="#606060" stroke-width="0.8"/><path d="M696.6 515.9v3.2l1.8 -1.6z" fill="#000"/><rect x="540" y="514" width="31" height="7" fill="#C8C4BC"/></svg>
<div class="a" style="left:718px;top:57px;width:1px;height:473px;background:#404040"></div>
</body></html>
